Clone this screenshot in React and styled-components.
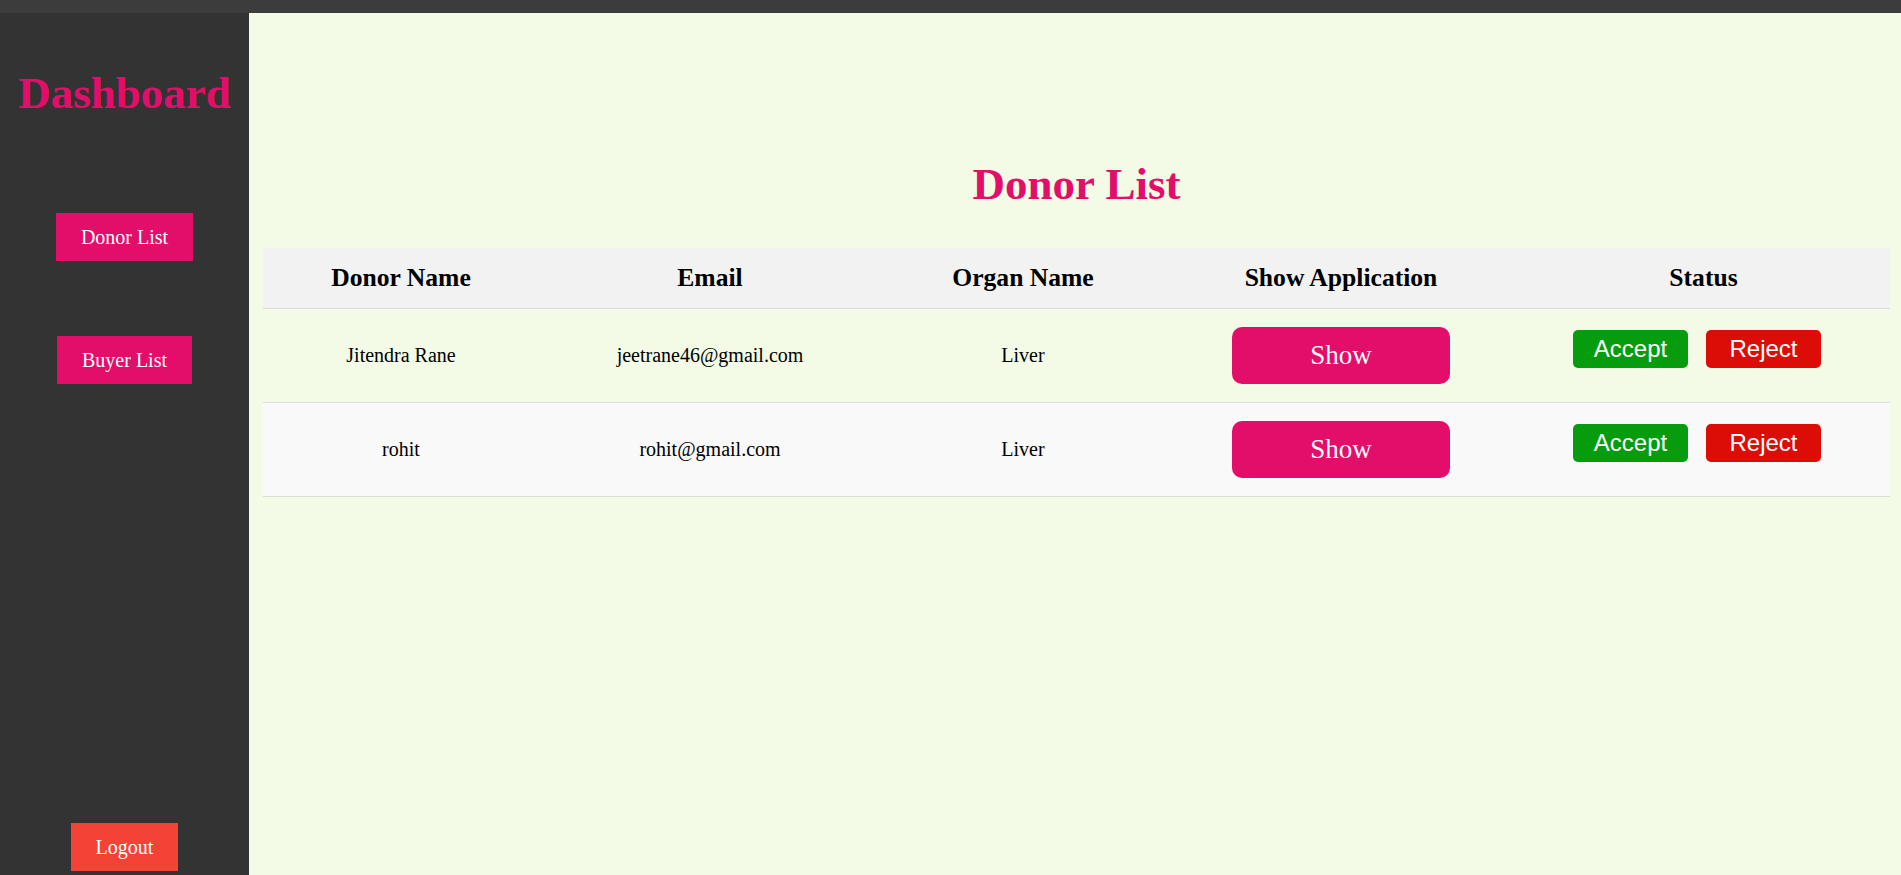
import React from "react";
import styled, { createGlobalStyle } from "styled-components";

const GlobalStyle = createGlobalStyle`
  html, body {
    margin: 0;
    padding: 0;
    height: 100%;
    overflow: hidden;
  }
  body {
    font-family: "Liberation Serif", "Times New Roman", serif;
    background: #f3fbe6;
  }
  * { box-sizing: border-box; }
`;

const PINK = "#e30d6a";

const Page = styled.div`
  display: flex;
  flex-direction: column;
  width: 1901px;
  height: 875px;
`;

const TopBar = styled.div`
  height: 13px;
  flex: none;
  background: #3c3c3c;
`;

const Body = styled.div`
  flex: 1;
  display: flex;
  min-height: 0;
`;

const Sidebar = styled.aside`
  width: 249px;
  flex: none;
  background: #333333;
  display: flex;
  flex-direction: column;
  align-items: center;
  padding: 54px 0 4px;
`;

const Brand = styled.h1`
  margin: 0 0 94px;
  font-family: "Liberation Serif", "Times New Roman", serif;
  font-weight: bold;
  font-size: 45px;
  line-height: 52px;
  color: ${PINK};
`;

const NavButton = styled.button`
  border: none;
  border-radius: 0;
  cursor: pointer;
  font-family: "Liberation Serif", "Times New Roman", serif;
  font-size: 20px;
  line-height: 24px;
  padding: 12px 25px;
  color: #ffffff;
  background: ${(p) => (p.$danger ? "#f44336" : PINK)};
  margin-bottom: ${(p) => (p.$gap ? `${p.$gap}px` : "0")};
  margin-top: ${(p) => (p.$bottom ? "auto" : "0")};
`;

const Main = styled.main`
  flex: 1;
  background: #f3fbe6;
  padding: 145px 11px 0 14px;
`;

const Title = styled.h2`
  margin: 0 0 38px;
  text-align: center;
  font-family: "Liberation Serif", "Times New Roman", serif;
  font-weight: bold;
  font-size: 45px;
  line-height: 52px;
  color: ${PINK};
`;

const Table = styled.table`
  width: 100%;
  border-collapse: collapse;
  table-layout: fixed;
  font-family: "Liberation Serif", "Times New Roman", serif;
`;

const HeadRow = styled.tr`
  background: #f2f2f2;
  border-bottom: 1px solid #dddddd;
`;

const Th = styled.th`
  width: ${(p) => p.$w}px;
  height: 60px;
  padding: 0;
  font-size: 25.6px;
  font-weight: bold;
  color: #000;
  text-align: center;
  vertical-align: middle;
`;

const Row = styled.tr`
  background: ${(p) => (p.$alt ? "#f9f9f9" : "transparent")};
  border-bottom: 1px solid #dddddd;
`;

const Td = styled.td`
  height: 94px;
  padding: 0;
  font-size: 20px;
  color: #000;
  text-align: center;
  vertical-align: middle;
`;

const ShowButton = styled.button`
  width: 218px;
  height: 57px;
  border: none;
  border-radius: 10px;
  background: ${PINK};
  color: #fff;
  font-family: "Liberation Serif", "Times New Roman", serif;
  font-size: 27px;
  cursor: pointer;
  display: block;
  margin: 0 auto;
`;

const StatusGroup = styled.div`
  display: flex;
  justify-content: center;
  gap: 18px;
  padding-right: 13px;
  margin-bottom: 12px;
`;

const ActionButton = styled.button`
  width: 115px;
  height: 38px;
  border: none;
  border-radius: 5px;
  padding: 0;
  color: #fff;
  font-family: "Liberation Sans", Arial, sans-serif;
  font-size: 24px;
  cursor: pointer;
  background: ${(p) => (p.$variant === "accept" ? "#079c0e" : "#dc0d06")};
`;

const columns = [
  { label: "Donor Name", w: 276 },
  { label: "Email", w: 342 },
  { label: "Organ Name", w: 284 },
  { label: "Show Application", w: 352 },
  { label: "Status", w: 373 },
];

const donors = [
  { name: "Jitendra Rane", email: "jeetrane46@gmail.com", organ: "Liver" },
  { name: "rohit", email: "rohit@gmail.com", organ: "Liver" },
];

export default function App() {
  return (
    <>
      <GlobalStyle />
      <Page>
        <TopBar />
        <Body>
          <Sidebar>
            <Brand>Dashboard</Brand>
            <NavButton $gap={75}>Donor List</NavButton>
            <NavButton>Buyer List</NavButton>
            <NavButton $danger $bottom>
              Logout
            </NavButton>
          </Sidebar>
          <Main>
            <Title>Donor List</Title>
            <Table>
              <thead>
                <HeadRow>
                  {columns.map((c) => (
                    <Th key={c.label} $w={c.w}>
                      {c.label}
                    </Th>
                  ))}
                </HeadRow>
              </thead>
              <tbody>
                {donors.map((d, i) => (
                  <Row key={d.email} $alt={i % 2 === 1}>
                    <Td>{d.name}</Td>
                    <Td>{d.email}</Td>
                    <Td>{d.organ}</Td>
                    <Td>
                      <ShowButton>Show</ShowButton>
                    </Td>
                    <Td>
                      <StatusGroup>
                        <ActionButton $variant="accept">Accept</ActionButton>
                        <ActionButton $variant="reject">Reject</ActionButton>
                      </StatusGroup>
                    </Td>
                  </Row>
                ))}
              </tbody>
            </Table>
          </Main>
        </Body>
      </Page>
    </>
  );
}
